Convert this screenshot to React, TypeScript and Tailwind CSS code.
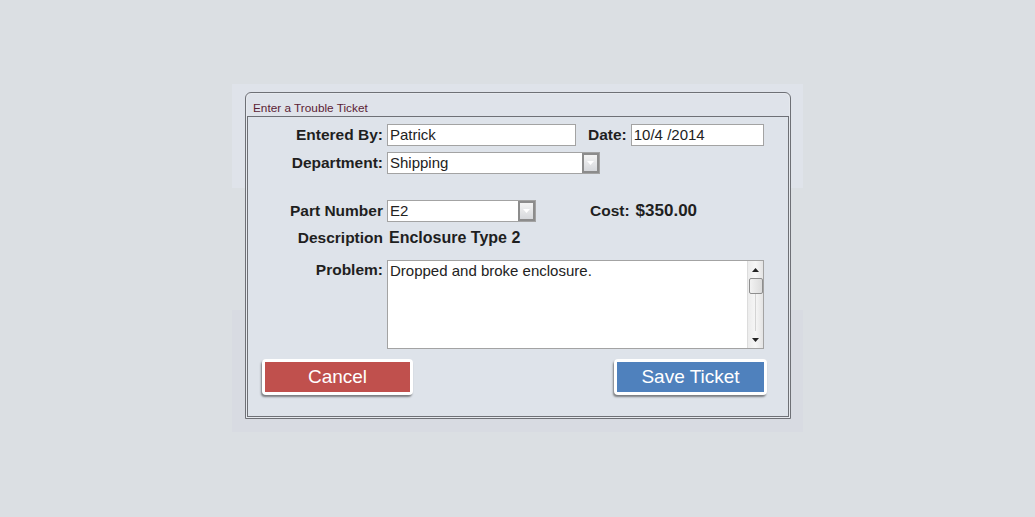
import React from "react";

const label = "font-['Liberation_Sans',Arial,sans-serif] text-[15.5px] font-bold text-[#1f1f1f] leading-[22px]";
const inputText = "font-['Liberation_Sans',Arial,sans-serif] text-[15px] text-[#222] leading-[20px]";

function DropBtn() {
  return (
    <div className="w-[17px] h-full border-2 border-[#8c8c8c] bg-[linear-gradient(to_bottom,#f4f4f4,#d6d8dc)] flex items-center justify-center">
      <svg width="7" height="4" viewBox="0 0 7 4">
        <path d="M0 0 L7 0 L3.5 4 Z" fill="#ffffff" />
      </svg>
    </div>
  );
}

function Select({ value, w }: { value: string; w: string }) {
  return (
    <div className={`${w} h-[22px] border border-[#a3a3a3] bg-white flex items-stretch`}>
      <div className={`${inputText} flex-1 pl-[2px] flex items-center`}>{value}</div>
      <DropBtn />
    </div>
  );
}

export default function App() {
  return (
    <div className="w-[1035px] h-[517px] bg-[#dbdfe3] pt-[84px] pl-[232px]">
      <div className="w-[571px] h-[348px] bg-[linear-gradient(to_bottom,#dfe3ea_0px,#dfe3ea_104px,transparent_104px,transparent_226px,#d8dbe2_226px,#d8dbe2_348px)] pt-[8px] pl-[13px]">
        <div className="w-[546px] h-[327px] border border-[#6e7076] rounded-t-[6px] p-[1px] bg-[#e6e9ee] flex flex-col">
          <div className="h-[22px] bg-[#dfe3ea] rounded-t-[5px] pl-[6px] pt-[7px] font-['Liberation_Sans',Arial,sans-serif] text-[11.8px] leading-[14px] text-[#5b2234]">
            Enter a Trouble Ticket
          </div>
          <div className="flex-1 border border-[#6e7076] bg-[#dee3ea] pt-[7px] flex flex-col">
            {/* Row 1 */}
            <div className="flex items-center h-[22px]">
              <div className={`${label} w-[135px] text-right`}>Entered By:</div>
              <div className={`ml-[4px] w-[189px] h-[22px] border border-[#a3a3a3] bg-white pl-[2px] ${inputText}`}>Patrick</div>
              <div className={`${label} ml-[12px]`}>Date:</div>
              <div className={`ml-[4px] w-[133px] h-[22px] border border-[#a3a3a3] bg-white pl-[2px] ${inputText}`}>10/4 /2014</div>
            </div>
            {/* Row 2 */}
            <div className="flex items-center h-[22px] mt-[6px]">
              <div className={`${label} w-[135px] text-right`}>Department:</div>
              <div className="ml-[4px]">
                <Select value="Shipping" w="w-[213px]" />
              </div>
            </div>
            {/* Row 3 */}
            <div className="flex items-center h-[22px] mt-[26px]">
              <div className={`${label} w-[135px] text-right`}>Part Number</div>
              <div className="ml-[4px]">
                <Select value="E2" w="w-[149px]" />
              </div>
              <div className={`${label} ml-[54px]`}>Cost:</div>
              <div className={`${label} text-[17px] ml-[6px]`}>$350.00</div>
            </div>
            {/* Row 4 */}
            <div className="flex items-center h-[20px] mt-[6px]">
              <div className={`${label} w-[135px] text-right`}>Description</div>
              <div className={`${label} text-[16px] ml-[6px]`}>Enclosure Type 2</div>
            </div>
            {/* Row 5 */}
            <div className="flex items-start mt-[12px]">
              <div className={`${label} w-[135px] text-right -mt-[1px]`}>Problem:</div>
              <div className="ml-[4px] w-[377px] h-[89px] border border-[#a3a3a3] bg-white flex">
                <div className={`${inputText} flex-1 pl-[2px] pt-[0px]`}>Dropped and broke enclosure.</div>
                <div className="w-[16px] h-full bg-[linear-gradient(to_right,#ececec,#f6f6f6,#e4e4e4)] border-l border-[#dcdcdc] flex flex-col items-center">
                  <div className="h-[17px] flex items-center justify-center">
                    <svg width="7" height="4" viewBox="0 0 7 4">
                      <path d="M0 4 L7 4 L3.5 0 Z" fill="#222" />
                    </svg>
                  </div>
                  <div className="w-[14px] h-[16px] border border-[#8e8e8e] rounded-[2px] bg-[linear-gradient(to_right,#f2f2f2,#dcdcdc)]" />
                  <div className="flex-1 w-[1px] bg-[#d4d4d4]" />
                  <div className="h-[17px] flex items-center justify-center">
                    <svg width="7" height="4" viewBox="0 0 7 4">
                      <path d="M0 0 L7 0 L3.5 4 Z" fill="#222" />
                    </svg>
                  </div>
                </div>
              </div>
            </div>
            {/* Buttons */}
            <div className="flex justify-between pl-[14px] pr-[21px] mt-[10px]">
              <div className="w-[151px] h-[36px] bg-white rounded-[4px] p-[3px] shadow-[-1px_2px_2px_rgba(0,0,0,0.45)]">
                <div className="w-full h-full bg-[#c0504d] flex items-center justify-center pt-[1px] font-['Liberation_Sans',Arial,sans-serif] text-[19px] text-white">
                  Cancel
                </div>
              </div>
              <div className="w-[153px] h-[36px] bg-white rounded-[4px] p-[3px] shadow-[-1px_2px_2px_rgba(0,0,0,0.45)]">
                <div className="w-full h-full bg-[#4f81bd] flex items-center justify-center pt-[1px] font-['Liberation_Sans',Arial,sans-serif] text-[19px] text-white">
                  Save Ticket
                </div>
              </div>
            </div>
          </div>
        </div>
      </div>
    </div>
  );
}
